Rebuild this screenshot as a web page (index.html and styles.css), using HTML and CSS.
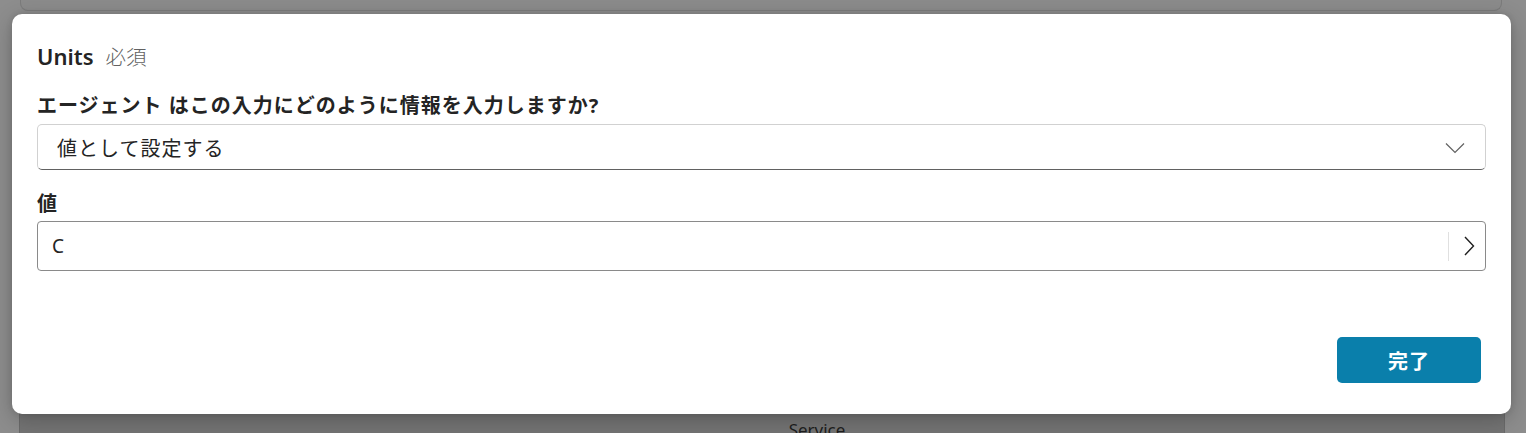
FILE: index.html
```html
<!DOCTYPE html>
<html lang="ja">
<head>
<meta charset="utf-8">
<link rel="stylesheet" href="styles.css">
</head>
<body>
<div class="page">
  <div class="bg-card bg-card-top"></div>
  <div class="bg-spacer"></div>
  <div class="bg-card bg-card-bottom"><span class="bg-text">Service</span></div>

  <div class="overlay">
    <div class="modal">
      <div class="title"><span class="title-main">Units</span><span class="required">必須</span></div>
      <div class="field">
        <div class="label">エージェント はこの入力にどのように情報を入力しますか?</div>
        <div class="select">
          <span class="select-text">値として設定する</span>
          <svg class="chev-down" width="20" height="12" viewBox="0 0 20 12"><path d="M1 1.5 L10 10.5 L19 1.5" fill="none" stroke="#616161" stroke-width="1.2"/></svg>
        </div>
      </div>
      <div class="field field-value">
        <div class="label">値</div>
        <div class="input">
          <span class="input-text">C</span>
          <span class="divider"></span>
          <svg class="chev-right" width="12" height="20" viewBox="0 0 12 20"><path d="M2 1 L10.5 10 L2 19" fill="none" stroke="#1f1f1f" stroke-width="1.4"/></svg>
        </div>
      </div>
      <div class="footer">
        <button class="btn">完了</button>
      </div>
    </div>
  </div>
</div>
</body>
</html>
```

FILE: styles.css
```css
* { box-sizing: border-box; }
html, body { margin: 0; padding: 0; }
body {
  width: 1526px;
  height: 433px;
  overflow: hidden;
  background: #8d8d8d;
  font-family: "Noto Sans", "Noto Sans CJK JP", sans-serif;
  color: #242424;
}
.page {
  position: relative;
  width: 1526px;
  height: 433px;
  display: flex;
  flex-direction: column;
  padding: 0 21px 0 19px;
}
.bg-card {
  border: 1px solid #7b7b7b;
  background: #8b8b8b;
}
.bg-card-top {
  height: 11px;
  margin: 0 3px 0 1px;
  border-top: none;
  border-radius: 0 0 8px 8px;
}
.bg-spacer { flex: 1; }
.bg-card-bottom {
  height: 33px;
  border-bottom: none;
  display: flex;
  justify-content: center;
  padding-top: 17px;
  background: #747474;
  border-color: #6a6a6a;
}
.bg-text {
  font-size: 17px;
  color: #1e1e1e;
  margin-left: 110px;
}
.overlay {
  position: absolute;
  inset: 0;
  padding: 14px 15px 19px 12px;
}
.modal {
  height: 400px;
  background: #ffffff;
  border-radius: 10px;
  box-shadow: 0 6px 22px rgba(0,0,0,0.22), 0 0 6px rgba(0,0,0,0.12);
  padding: 28px 25px 31px 25px;
  display: flex;
  flex-direction: column;
}
.title {
  height: 28px;
  line-height: 28px;
  display: flex;
  align-items: baseline;
}
.title-main {
  font-size: 22px;
  font-weight: 600;
  color: #242424;
}
.required {
  font-size: 20.5px;
  color: #616161;
  margin-left: 12px;
  font-family: "Noto Sans CJK JP", sans-serif;
  font-weight: 300;
}
.field { margin-top: 24px; }
.field-value { margin-top: 22px; }
.label {
  font-family: "Noto Sans", "Noto Sans CJK JP", sans-serif;
  font-size: 20px;
  font-weight: 700;
  line-height: 24px;
  height: 24px;
  color: #242424;
  letter-spacing: 1px;
}
.select {
  margin-top: 6px;
  height: 46px;
  border: 1px solid #d1d1d1;
  border-bottom-color: #616161;
  border-radius: 5px;
  display: flex;
  align-items: center;
  padding: 0 20px 0 19px;
}
.select-text {
  flex: 1;
  font-family: "Noto Sans CJK JP", sans-serif;
  font-size: 20px;
  color: #242424;
  letter-spacing: 1px;
}
.chev-down { display: block; margin-top: 2px; }
.input {
  margin-top: 5px;
  height: 50px;
  border: 1px solid #8a8a8a;
  border-radius: 4px;
  display: flex;
  align-items: center;
  padding: 0 10px 0 14px;
}
.input-text {
  flex: 1;
  font-size: 19px;
  color: #242424;
}
.divider {
  width: 1px;
  height: 29px;
  background: #e0e0e0;
  margin-right: 14px;
}
.chev-right { display: block; }
.footer {
  margin-top: auto;
  display: flex;
  justify-content: flex-end;
  padding-right: 5px;
}
.btn {
  width: 144px;
  height: 46px;
  border: none;
  border-radius: 5px;
  background: #0a7fab;
  color: #ffffff;
  font-family: "Noto Sans CJK JP", sans-serif;
  font-size: 20px;
  font-weight: 700;
  letter-spacing: 1px;
}
```
